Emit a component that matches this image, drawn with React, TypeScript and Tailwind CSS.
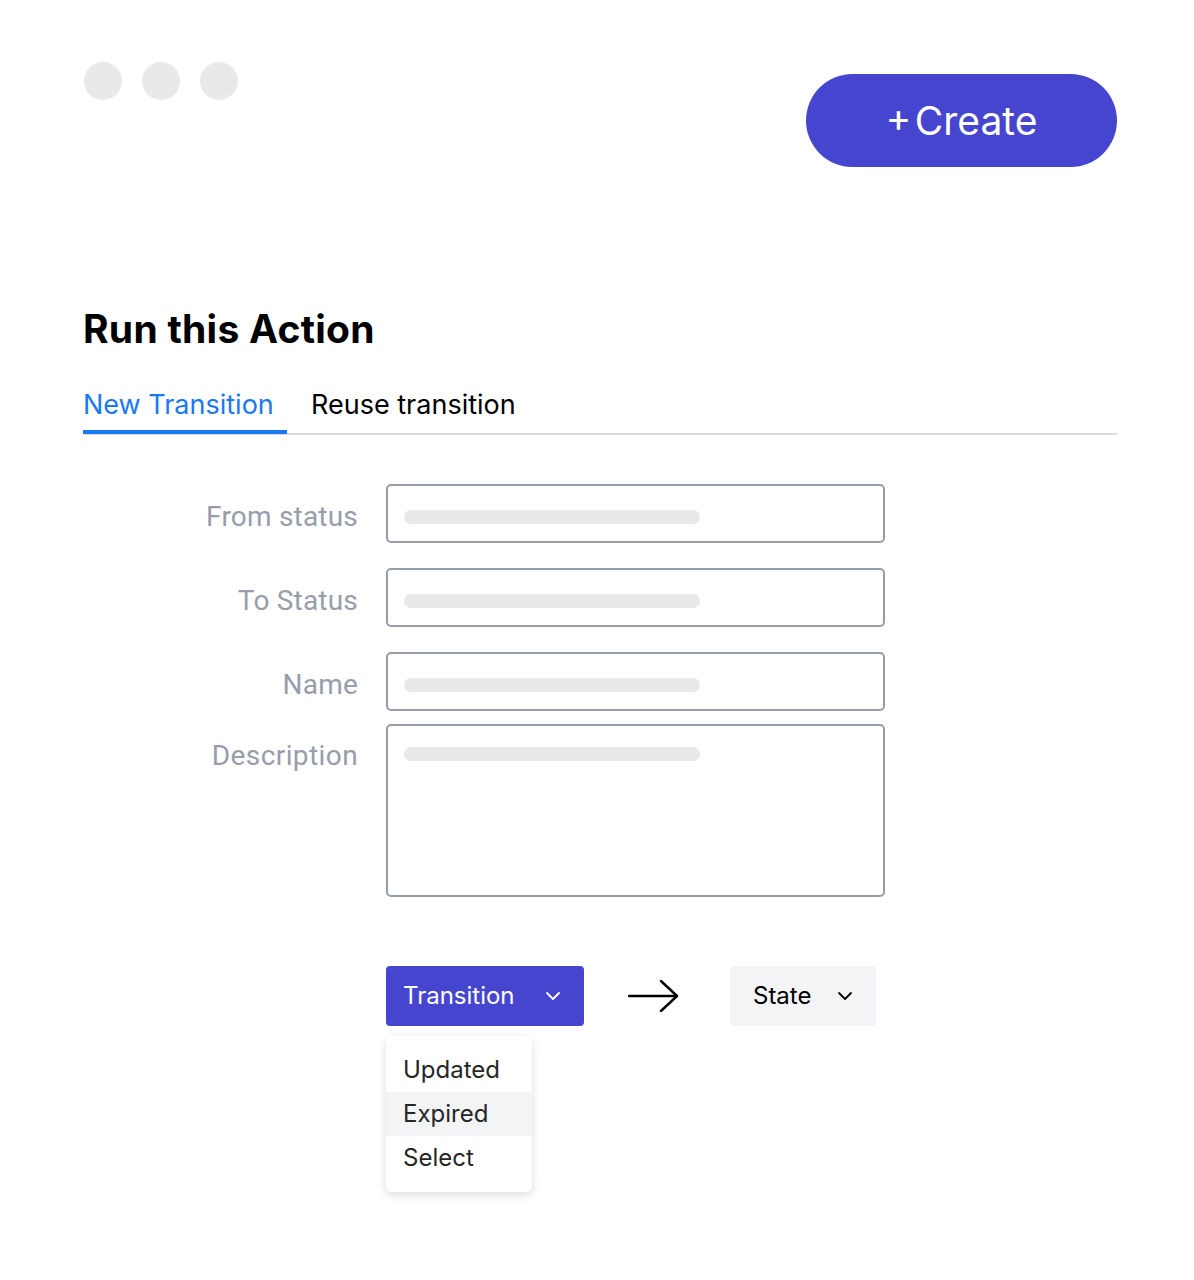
import { ChevronDown } from 'lucide-react';

function App() {
  const fields = [
    { label: 'From status' },
    { label: 'To Status' },
    { label: 'Name' },
  ];

  return (
    <div className="min-h-screen bg-white font-['Inter',sans-serif] text-black">
      <div className="ml-[83px] w-[1034px] pt-[62px] pb-[80px]">
        {/* Header row */}
        <div className="flex items-start justify-between">
          <div className="flex gap-[20px] pl-px">
            <span className="block w-[38px] h-[38px] rounded-full bg-[#e8e9eb]" />
            <span className="block w-[38px] h-[38px] rounded-full bg-[#e8e9eb]" />
            <span className="block w-[38px] h-[38px] rounded-full bg-[#e8e9eb]" />
          </div>
          <button className="mt-[12px] w-[311px] h-[93px] rounded-full bg-[#4545cf] text-white text-[39px] leading-none">
            +&#8202;Create
          </button>
        </div>

        {/* Title */}
        <h1 className="mt-[138px] text-[39px] leading-[47px] font-bold tracking-[0.25px]">Run this Action</h1>

        {/* Tabs */}
        <div className="mt-[37px] flex border-b-2 border-[#dcdcdc]">
          <div className="w-[204px] -mb-[1px] border-b-4 border-[#1a78f2] pb-[9px] text-[27px] leading-[32px] text-[#1a78f2]">
            New Transition
          </div>
          <div className="ml-[24px] pb-[9px] text-[27px] leading-[32px] text-black">Reuse transition</div>
        </div>

        {/* Form */}
        <div className="mt-[49px] flex flex-col">
          {fields.map((f, i) => (
            <div key={f.label} className={`flex items-center ${i > 0 ? 'mt-[25px]' : ''}`}>
              <div className="w-[275px] pt-[6px] text-right font-['Roboto',sans-serif] text-[28px] tracking-[0.2px] text-[#979dab]">
                {f.label}
              </div>
              <div className="ml-[28px] w-[499px] h-[59px] rounded-[5px] border-2 border-[#959dab] pl-[16px] pt-[24px]">
                <div className="w-[296px] h-[14px] rounded-full bg-[#e9e9e9]" />
              </div>
            </div>
          ))}
          <div className="mt-[13px] flex items-start">
            <div className="w-[275px] pt-[11px] text-right font-['Roboto',sans-serif] text-[28px] tracking-[0.4px] text-[#979dab]">
              Description
            </div>
            <div className="ml-[28px] w-[499px] h-[173px] rounded-[5px] border-2 border-[#959dab] pl-[16px] pt-[21px]">
              <div className="w-[296px] h-[14px] rounded-full bg-[#e9e9e9]" />
            </div>
          </div>
        </div>

        {/* Transition row */}
        <div className="mt-[69px] ml-[303px] flex items-center">
          <div className="relative">
            <button className="flex items-center w-[198px] h-[60px] rounded-[4px] bg-[#4545cf] pl-[17px] text-white text-[24px]">
              <span>Transition</span>
              <ChevronDown className="ml-auto mr-[19px] w-[24px] h-[24px]" strokeWidth={1.8} />
            </button>
            {/* Menu */}
            <div className="absolute left-0 top-[70px] w-[146px] rounded-[6px] bg-white py-[12px] shadow-[0_3px_10px_rgba(0,0,0,0.14)] text-[24px] text-[#262626]">
              <div className="h-[44px] flex items-center pl-[17px]">Updated</div>
              <div className="h-[44px] flex items-center pl-[17px] bg-[#f3f4f6]">Expired</div>
              <div className="h-[44px] flex items-center pl-[17px]">Select</div>
            </div>
          </div>

          <svg className="ml-[44px]" width="51" height="32" viewBox="0 0 51 32" fill="none" stroke="#000" strokeWidth="2.4" strokeLinecap="round" strokeLinejoin="round">
            <path d="M1 16h48" />
            <path d="M33 1l16 15-16 15" />
          </svg>

          <button className="ml-[51px] flex items-center w-[146px] h-[60px] rounded-[4px] bg-[#f3f4f6] pl-[23px] text-black text-[24px]">
            <span>State</span>
            <ChevronDown className="ml-auto mr-[19px] w-[24px] h-[24px]" strokeWidth={1.8} />
          </button>
        </div>
      </div>
    </div>
  );
}

export default App;
